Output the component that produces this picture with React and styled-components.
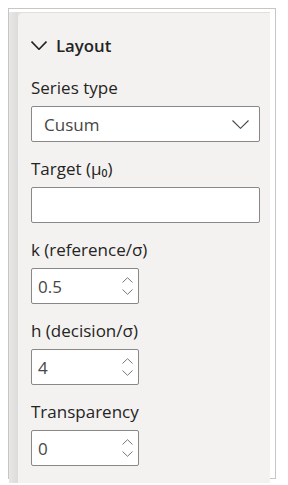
import React from "react";
import styled, { createGlobalStyle } from "styled-components";

const Global = createGlobalStyle`
  html, body { margin: 0; padding: 0; background: #ffffff; }
  body { font-family: "Open Sans", "Noto Sans", sans-serif; }
  * { box-sizing: border-box; }
`;

const Frame = styled.div`
  margin: 8px;
  width: 268px;
  height: 471px;
  border: 1px solid #c8c6c4;
  padding: 3px 5px 1px 0;
  display: flex;
  flex-direction: column;
`;

const Body = styled.div`
  flex: 1;
  display: flex;
  background: #e3e2e0;
`;

const Strip = styled.div`
  width: 9px;
  background: linear-gradient(to right, #e8e7e5, #dedcda);
`;

const Panel = styled.div`
  flex: 1;
  background: #f3f2f1;
  border-top: 1px solid #e1dfdd;
  border-top-left-radius: 5px;
  padding: 22px 0 0 13px;
  display: flex;
  flex-direction: column;
`;

const Header = styled.div`
  display: flex;
  align-items: center;
  gap: 9px;
  height: 20px;
  font-size: 16.8px;
  font-weight: 600;
  color: #252423;
  margin-bottom: 23px;
`;

const Field = styled.div`
  display: flex;
  flex-direction: column;
  margin-bottom: 17px;
`;

const Label = styled.div`
  font-size: 17px;
  line-height: 20px;
  color: #252423;
  margin-bottom: 8px;
  white-space: nowrap;
`;

const Box = styled.div`
  width: ${(p) => p.$w}px;
  height: 36px;
  background: #ffffff;
  border: 1px solid #8a8886;
  border-radius: 2px;
  display: flex;
  align-items: center;
  justify-content: space-between;
  padding: 0 ${(p) => (p.$select ? 10 : 5)}px 0 ${(p) => (p.$select ? 12 : 6)}px;
  font-size: 17px;
  color: #484644;
`;

const Spinner = styled.div`
  display: flex;
  flex-direction: column;
  gap: 6px;
`;

const Chevron = ({ w, h, up, sw = 1.1, color = "#605e5c" }) => (
  <svg width={w} height={h} viewBox={`0 0 ${w} ${h}`} style={{ display: "block" }}>
    <polyline
      points={up ? `0.5,${h - 0.5} ${w / 2},0.7 ${w - 0.5},${h - 0.5}` : `0.5,0.5 ${w / 2},${h - 0.7} ${w - 0.5},0.5`}
      fill="none"
      stroke={color}
      strokeWidth={sw}
    />
  </svg>
);

const NumberBox = ({ value }) => (
  <Box $w={108}>
    <span>{value}</span>
    <Spinner>
      <Chevron w={11} h={6} up sw={1} color="#797775" />
      <Chevron w={11} h={6} sw={1} color="#797775" />
    </Spinner>
  </Box>
);

export default function App() {
  return (
    <>
      <Global />
      <Frame>
        <Body>
          <Strip />
          <Panel>
            <Header>
              <Chevron w={16} h={9} sw={1.6} color="#252423" />
              <span>Layout</span>
            </Header>
            <Field>
              <Label>Series type</Label>
              <Box $w={229} $select>
                <span>Cusum</span>
                <Chevron w={17} h={9} sw={1.1} color="#484644" />
              </Box>
            </Field>
            <Field>
              <Label>Target (μ₀)</Label>
              <Box $w={229} />
            </Field>
            <Field>
              <Label>k (reference/σ)</Label>
              <NumberBox value="0.5" />
            </Field>
            <Field>
              <Label>h (decision/σ)</Label>
              <NumberBox value="4" />
            </Field>
            <Field>
              <Label>Transparency</Label>
              <NumberBox value="0" />
            </Field>
          </Panel>
        </Body>
      </Frame>
    </>
  );
}
